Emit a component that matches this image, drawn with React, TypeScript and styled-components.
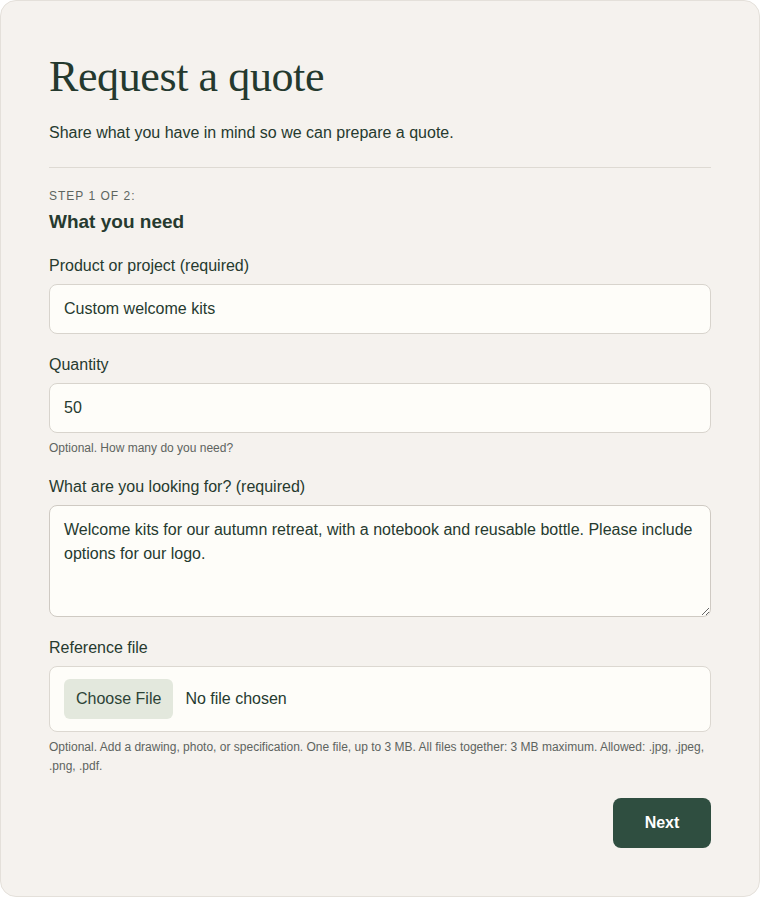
import styled, { createGlobalStyle } from "styled-components";

const GlobalStyle = createGlobalStyle`
  html, body {
    margin: 0;
    padding: 0;
    background: #ffffff;
  }
  * {
    box-sizing: border-box;
  }
`;

const Card = styled.form`
  width: 760px;
  min-height: 897px;
  background: #f5f2ee;
  border: 1px solid #e4e0da;
  border-radius: 16px;
  padding: 50px 48px 48px;
  font-family: "Liberation Sans", Arial, sans-serif;
  color: #263a2f;
  display: flex;
  flex-direction: column;
`;

const Title = styled.h1`
  font-family: "Liberation Serif", "Times New Roman", serif;
  font-weight: 400;
  font-size: 44px;
  line-height: 52px;
  letter-spacing: -0.4px;
  color: #24392e;
  margin: 0 0 18px;
`;

const Lead = styled.p`
  font-size: 16px;
  line-height: 24px;
  margin: 0 0 22px;
`;

const Divider = styled.hr`
  border: none;
  border-top: 1px solid #dedad3;
  margin: 0 0 20px;
`;

const Step = styled.div`
  font-size: 12px;
  line-height: 16px;
  letter-spacing: 1px;
  text-transform: uppercase;
  color: #5d655f;
`;

const StepTitle = styled.h2`
  font-size: 19px;
  line-height: 26px;
  font-weight: 700;
  margin: 5px 0 21px;
`;

const Field = styled.div<{ $gap?: number }>`
  display: flex;
  flex-direction: column;
  margin-bottom: ${(p) => p.$gap ?? 21}px;
`;

const Label = styled.label`
  font-size: 16px;
  line-height: 20px;
  margin-bottom: 8px;
`;

const TextInput = styled.input`
  height: 50px;
  width: 100%;
  border: 1px solid #d8d4cd;
  border-radius: 8px;
  background: #fefdf9;
  padding: 0 14px;
  font-family: inherit;
  font-size: 16px;
  color: #263a2f;
  outline: none;
`;

const TextArea = styled.textarea`
  height: 112px;
  width: 100%;
  border: 1px solid #cfcac3;
  border-radius: 8px;
  background: #fefdf9;
  padding: 12px 14px;
  font-family: inherit;
  font-size: 16px;
  line-height: 24px;
  color: #263a2f;
  resize: vertical;
  outline: none;
  display: block;
`;

const FileBox = styled.div`
  height: 66px;
  border: 1px solid #dcd8d1;
  border-radius: 8px;
  background: #fefdf9;
  padding: 0 14px;
  display: flex;
  align-items: center;
  gap: 12px;
`;

const FileButton = styled.span`
  height: 40px;
  padding: 0 12px;
  display: inline-flex;
  align-items: center;
  background: #e3e8dd;
  border-radius: 6px;
  font-size: 16px;
  color: #2c4336;
`;

const FileName = styled.span`
  font-size: 16px;
  color: #263a2f;
`;

const Hint = styled.p`
  font-size: 12px;
  line-height: 19px;
  color: #5e645f;
  margin: 6px 0 0;
`;

const Actions = styled.div`
  display: flex;
  justify-content: flex-end;
`;

const NextButton = styled.button`
  width: 98px;
  height: 50px;
  border: none;
  border-radius: 8px;
  background: #2f4e40;
  color: #ffffff;
  font-family: inherit;
  font-size: 16px;
  font-weight: 700;
`;

export default function App() {
  return (
    <>
      <GlobalStyle />
      <Card onSubmit={(e) => e.preventDefault()}>
        <Title>Request a quote</Title>
        <Lead>Share what you have in mind so we can prepare a quote.</Lead>
        <Divider />
        <Step>Step 1 of 2:</Step>
        <StepTitle>What you need</StepTitle>

        <Field>
          <Label>Product or project (required)</Label>
          <TextInput defaultValue="Custom welcome kits" />
        </Field>

        <Field $gap={19}>
          <Label>Quantity</Label>
          <TextInput defaultValue="50" />
          <Hint>Optional. How many do you need?</Hint>
        </Field>

        <Field>
          <Label>What are you looking for? (required)</Label>
          <TextArea defaultValue="Welcome kits for our autumn retreat, with a notebook and reusable bottle. Please include options for our logo." />
        </Field>

        <Field $gap={22}>
          <Label>Reference file</Label>
          <FileBox>
            <FileButton>Choose File</FileButton>
            <FileName>No file chosen</FileName>
          </FileBox>
          <Hint>
            Optional. Add a drawing, photo, or specification. One file, up to 3 MB. All files
            together: 3 MB maximum. Allowed: .jpg, .jpeg, .png, .pdf.
          </Hint>
        </Field>

        <Actions>
          <NextButton type="submit">Next</NextButton>
        </Actions>
      </Card>
    </>
  );
}
